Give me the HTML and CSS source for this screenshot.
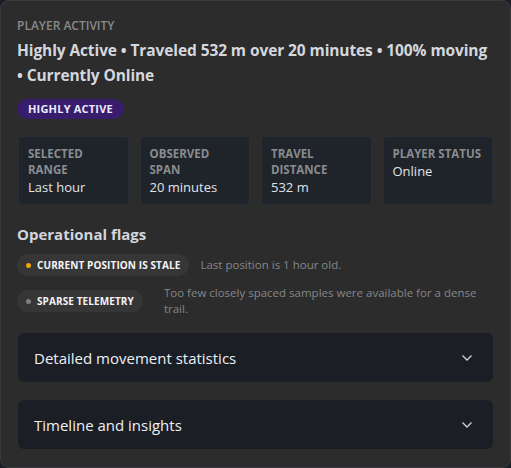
FILE: index.html
```html
<!DOCTYPE html>
<html>
<head>
<meta charset="utf-8">
<link rel="stylesheet" href="styles.css">
</head>
<body>
<section class="panel">
  <div class="eyebrow">Player activity</div>
  <h1 class="headline">Highly Active • Traveled 532 m over 20 minutes • 100% moving • Currently Online</h1>
  <span class="badge">Highly active</span>
  <div class="stats">
    <div class="stat"><div class="stat-label">Selected range</div><div class="stat-value">Last hour</div></div>
    <div class="stat"><div class="stat-label">Observed span</div><div class="stat-value">20 minutes</div></div>
    <div class="stat"><div class="stat-label">Travel distance</div><div class="stat-value">532 m</div></div>
    <div class="stat"><div class="stat-label">Player status</div><div class="stat-value">Online</div></div>
  </div>
  <h2 class="section-title">Operational flags</h2>
  <div class="flags">
    <div class="flag">
      <span class="pill"><span class="dot dot-warn"></span>Current position is stale</span>
      <span class="flag-desc">Last position is 1 hour old.</span>
    </div>
    <div class="flag flag-wide">
      <span class="pill"><span class="dot dot-muted"></span>Sparse telemetry</span>
      <span class="flag-desc">Too few closely spaced samples were available for a dense trail.</span>
    </div>
  </div>
  <div class="accordions">
    <div class="acc">
      <span class="acc-title">Detailed movement statistics</span>
      <svg class="chev" width="12" height="8" viewBox="0 0 12 8"><path d="M1.5 1.5 L6 6 L10.5 1.5" fill="none" stroke="#cfd3d8" stroke-width="1.3"/></svg>
    </div>
    <div class="acc">
      <span class="acc-title">Timeline and insights</span>
      <svg class="chev" width="12" height="8" viewBox="0 0 12 8"><path d="M1.5 1.5 L6 6 L10.5 1.5" fill="none" stroke="#cfd3d8" stroke-width="1.3"/></svg>
    </div>
  </div>
</section>
</body>
</html>
```
FILE: styles.css
```css
html, body {
  margin: 0;
  padding: 0;
  background: #1a1e27;
}
body {
  font-family: "Open Sans", "Noto Sans", sans-serif;
  width: 511px;
  height: 468px;
  overflow: hidden;
}
.panel {
  box-sizing: border-box;
  width: 511px;
  height: 468px;
  background: #2c2c2c;
  border: 1px solid #3a3b3e;
  border-radius: 9px;
  padding: 16px 17px 0 16px;
}
.eyebrow {
  font-size: 12px;
  font-weight: 600;
  text-transform: uppercase;
  color: #8a8a8a;
  line-height: 18px;
}
.headline {
  margin: 3px 0 0;
  font-size: 15.5px;
  letter-spacing: -0.1px;
  font-weight: 700;
  line-height: 25px;
  color: #d4d8de;
}
.badge {
  display: inline-block;
  margin-top: 11px;
  padding: 0 11px;
  height: 20px;
  line-height: 20px;
  border-radius: 10px;
  background: #381d6c;
  color: #ecebff;
  font-size: 11px;
  letter-spacing: 0.2px;
  font-weight: 700;
  text-transform: uppercase;
}
.stats {
  display: grid;
  grid-template-columns: repeat(4, 1fr);
  gap: 11px;
  margin-top: 17px;
  padding-left: 1px;
}
.stat {
  background: #1f232a;
  border: 1px solid #2a2e34;
  border-radius: 4px;
  padding: 9px 9px 0 9px;
  height: 69px;
  box-sizing: border-box;
}
.stat-label {
  font-size: 11.5px;
  font-weight: 700;
  text-transform: uppercase;
  color: #8a8c8f;
  line-height: 16px;
}
.stat-value {
  font-size: 13px;
  color: #e2e4e8;
  line-height: 18px;
  margin-top: 0;
}
.section-title {
  margin: 19px 0 0;
  font-size: 15px;
  font-weight: 700;
  color: #d2d6dc;
  line-height: 20px;
}
.flags {
  margin-top: 10px;
  display: flex;
  flex-direction: column;
  gap: 9px;
}
.flag {
  display: flex;
  align-items: center;
  gap: 11px;
}
.pill {
  flex: none;
  display: inline-flex;
  align-items: center;
  gap: 6px;
  height: 22px;
  padding: 0 9px 0 9px;
  border-radius: 11px;
  background: #363636;
  color: #f4f4f6;
  font-size: 10px;
  letter-spacing: 0.1px;
  font-weight: 700;
  text-transform: uppercase;
}
.dot {
  width: 5px;
  height: 5px;
  border-radius: 50%;
}
.dot-warn { background: #f0a30a; }
.dot-muted { background: #7c7f85; }
.flag-desc {
  font-size: 11.5px;
  color: #85878b;
  line-height: 16px;
  max-width: 320px;
}
.flag-wide .flag-desc {
  margin-left: 10px;
}
.accordions {
  margin-top: 16px;
  display: flex;
  flex-direction: column;
  gap: 18px;
  padding-left: 1px;
}
.acc {
  display: flex;
  align-items: center;
  justify-content: space-between;
  height: 49px;
  padding: 0 20px 0 16px;
  background: #1b1e24;
  border-radius: 6px;
}
.acc-title {
  font-size: 15px;
  color: #eef0f4;
}
.chev { display: block; }
```
